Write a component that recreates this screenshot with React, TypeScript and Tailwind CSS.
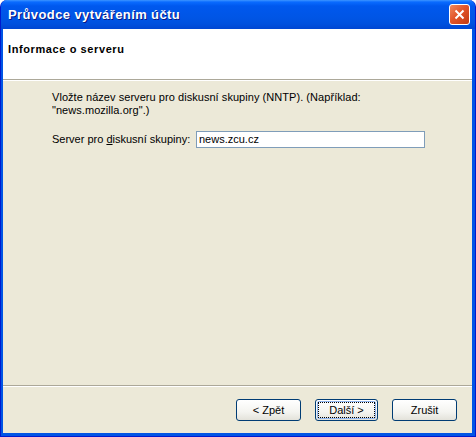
export default function App() {
  const ui = "font-['Liberation_Sans','DejaVu_Sans',sans-serif]";
  return (
    <div className={`w-[476px] h-[437px] bg-white ${ui}`}>
      {/* Window frame */}
      <div className="w-full h-full flex flex-col rounded-t-[7px] bg-[#0055e5] border-x border-b border-[#0019cf] overflow-hidden">
        {/* Title bar */}
        <div className="h-[29px] shrink-0 flex items-center justify-between pl-[7px] pr-[5px] bg-[linear-gradient(to_bottom,#3d95ff_0px,#0a6bff_2px,#0058ee_6px,#0055e5_18px,#0050de_24px,#0046d2_29px)]">
          <span className="text-white font-bold text-[13px] tracking-[0.4px] [text-shadow:1px_1px_0_#0a1883]">
            Průvodce vytvářením účtu
          </span>
          <div className="w-[21px] h-[21px] rounded-[3px] border border-white bg-[linear-gradient(135deg,#f0895e,#e2552a_45%,#c43a12)] flex items-center justify-center">
            <svg width="11" height="11" viewBox="0 0 11 11">
              <path d="M1.5 1.5L9.5 9.5M9.5 1.5L1.5 9.5" stroke="white" strokeWidth="2" />
            </svg>
          </div>
        </div>

        {/* Client area */}
        <div className="flex-1 flex flex-col ml-[2px] mr-[3px] mb-[3px] bg-[#ece9d8]">
          {/* Header */}
          <div className="h-[51px] shrink-0 bg-white pl-[5px] pt-[7px] border-b border-[#aca899]">
            <span className="text-[11px] font-bold tracking-[0.6px] text-black">Informace o serveru</span>
          </div>
          <div className="h-px bg-white" />

          {/* Content */}
          <div className="flex-1 flex flex-col pl-[49px] pr-[40px] pt-[10px] text-[11px] leading-[13px] text-black">
            <p className="w-[310px] tracking-[0.05px]">
              Vložte název serveru pro diskusní skupiny (NNTP). (Například: "news.mozilla.org".)
            </p>
            <div className="flex items-center mt-[14px]">
              <span className="w-[144px]">
                Server pro <span className="underline">d</span>iskusní skupiny:
              </span>
              <div className="w-[229px] h-[17px] border border-[#7f9db9] bg-white flex items-center px-[2px]">
                news.zcu.cz
              </div>
            </div>
          </div>

          {/* Bottom separator */}
          <div className="h-px bg-[#aca899]" />
          <div className="h-px bg-white" />

          {/* Buttons */}
          <div className="h-[46px] shrink-0 flex justify-end items-start pt-[12px] pr-[15px] gap-[14px] text-[11px] text-black">
            <button className="w-[65px] h-[22px] rounded-[3px] border border-[#003c74] bg-[linear-gradient(to_bottom,#ffffff,#f4f4f0_60%,#e3e2da)]">
              &lt; Zpět
            </button>
            <button className="w-[63px] h-[22px] rounded-[3px] border border-[#003c74] bg-[linear-gradient(to_bottom,#ffffff,#f4f4f0_60%,#e3e2da)] p-[1px]">
              <div className="w-full h-full rounded-[2px] border border-[#90b6f0] flex items-center justify-center">
                <div className="w-full h-full border border-dotted border-black flex items-center justify-center">
                  Další &gt;
                </div>
              </div>
            </button>
            <button className="w-[65px] h-[22px] rounded-[3px] border border-[#003c74] bg-[linear-gradient(to_bottom,#ffffff,#f4f4f0_60%,#e3e2da)]">
              Zrušit
            </button>
          </div>
        </div>
      </div>
    </div>
  );
}
